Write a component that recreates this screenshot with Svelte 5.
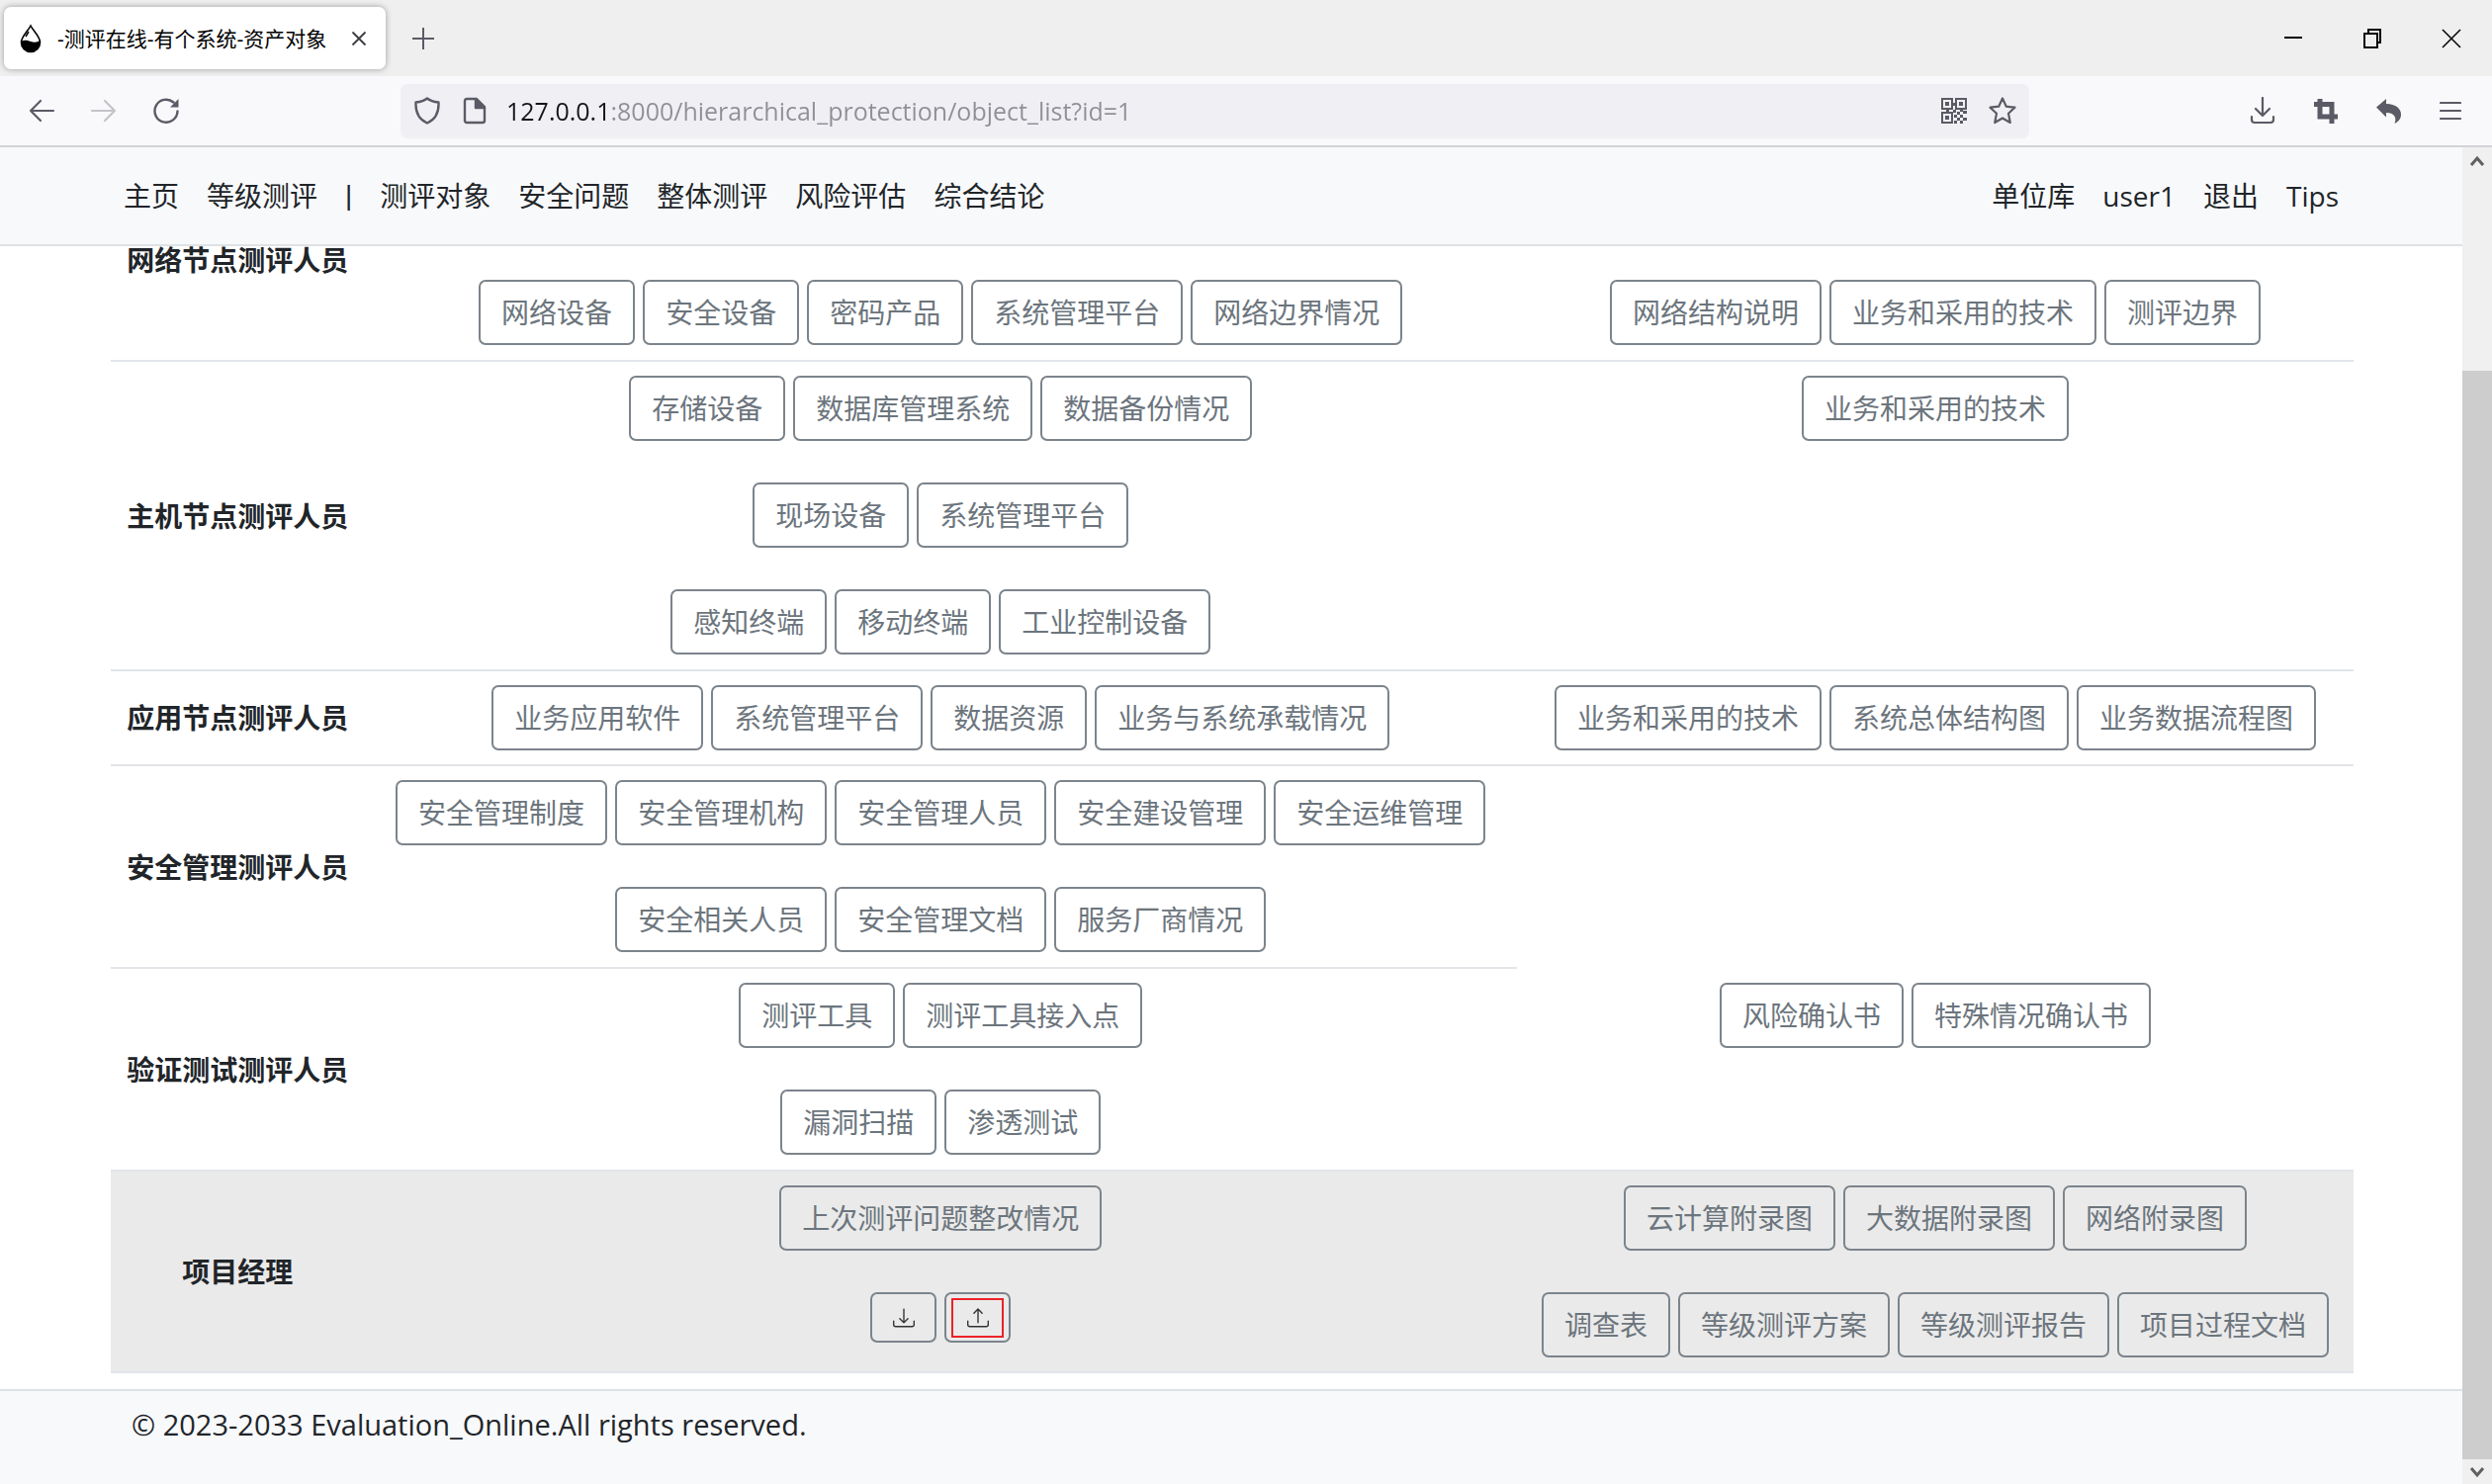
<script>
  const mainLinks = ['主页', '等级测评'];
  const sectionLinks = ['测评对象', '安全问题', '整体测评', '风险评估', '综合结论'];
  const accountLinks = ['单位库', 'user1', '退出', 'Tips'];

  // Each row holds its role and, per cell, the lines of buttons in it.
  const rows = [
    {
      role: '网络节点测评人员',
      tall: true,
      objects: [[], ['网络设备', '安全设备', '密码产品', '系统管理平台', '网络边界情况']],
      documents: [[], ['网络结构说明', '业务和采用的技术', '测评边界']]
    },
    {
      role: '主机节点测评人员',
      tall: true,
      objects: [
        ['存储设备', '数据库管理系统', '数据备份情况'],
        ['现场设备', '系统管理平台'],
        ['感知终端', '移动终端', '工业控制设备']
      ],
      documents: [['业务和采用的技术']]
    },
    {
      role: '应用节点测评人员',
      objects: [['业务应用软件', '系统管理平台', '数据资源', '业务与系统承载情况']],
      documents: [['业务和采用的技术', '系统总体结构图', '业务数据流程图']]
    },
    {
      role: '安全管理测评人员',
      tall: true,
      objects: [
        ['安全管理制度', '安全管理机构', '安全管理人员', '安全建设管理', '安全运维管理'],
        ['安全相关人员', '安全管理文档', '服务厂商情况']
      ]
    },
    {
      role: '验证测试测评人员',
      tall: true,
      objects: [
        ['测评工具', '测评工具接入点'],
        ['漏洞扫描', '渗透测试']
      ],
      documents: [['风险确认书', '特殊情况确认书']]
    },
    {
      role: '项目经理',
      active: true,
      transfer: true,
      objects: [['上次测评问题整改情况']],
      documents: [
        ['云计算附录图', '大数据附录图', '网络附录图'],
        ['调查表', '等级测评方案', '等级测评报告', '项目过程文档']
      ]
    }
  ];
</script>

{#snippet buttonLines(lines)}
  {#each lines as line}
    <div class="line">
      {#each line as label}
        <button class="btn">{label}</button>
      {/each}
    </div>
  {/each}
{/snippet}

<div class="window">
  <div class="tabs">
    <div class="tab">
      <svg width="24" height="30" viewBox="0 0 24 30">
        <path d="M12 2C9 8 2.500 13 2.500 19a9.500 9.500 0 0 0 19 0C21.500 13 15 8 12 2z" fill="#fff" stroke="#000" stroke-width="1.600" />
        <path d="M2.500 18c3-2 6-1 9.500 0s6.500 1 9.500-1v2a9.500 9.500 0 0 1-19 0z" fill="#000" />
        <path d="M10 8l-3 5" stroke="#000" stroke-width="1.500" />
      </svg>
      <span class="title">-测评在线-有个系统-资产对象</span>
      <button class="icon close" aria-label="关闭标签页">
        <svg width="16" height="16" viewBox="0 0 16 16"><path d="M1.500 1.500l13 13M14.500 1.500l-13 13" stroke="#3b3b42" stroke-width="1.800" /></svg>
      </button>
    </div>
    <button class="icon add" aria-label="新建标签页">
      <svg width="22" height="22" viewBox="0 0 22 22"><path d="M11 0v22M0 11h22" stroke="#5b5b66" stroke-width="2" /></svg>
    </button>
    <div class="controls">
      <button class="icon" aria-label="最小化">
        <svg width="20" height="20" viewBox="0 0 20 20"><path d="M1 9h18" stroke="#000" stroke-width="2" /></svg>
      </button>
      <button class="icon" aria-label="还原">
        <svg width="20" height="20" viewBox="0 0 20 20" fill="none" stroke="#000" stroke-width="2"><path d="M2 5h13v14H2zM6 5V1h12v13h-3" /></svg>
      </button>
      <button class="icon" aria-label="关闭">
        <svg width="20" height="20" viewBox="0 0 20 20"><path d="M1 1l18 18M19 1L1 19" stroke="#000" stroke-width="1.500" /></svg>
      </button>
    </div>
  </div>

  <div class="toolbar">
    <div class="history">
      <button class="icon" aria-label="后退">
        <svg width="28" height="28" viewBox="0 0 28 28" fill="none" stroke="#5b5b66" stroke-width="2.200" stroke-linecap="round" stroke-linejoin="round"><path d="M26 14H3M13 4L3 14l10 10" /></svg>
      </button>
      <button class="icon" aria-label="前进" disabled>
        <svg width="28" height="28" viewBox="0 0 28 28" fill="none" stroke="#c3c3c9" stroke-width="2.200" stroke-linecap="round" stroke-linejoin="round"><path d="M2 14h23M15 4l10 10-10 10" /></svg>
      </button>
      <button class="icon" aria-label="重新加载">
        <svg width="28" height="28" viewBox="0 0 28 28" fill="none" stroke="#5b5b66" stroke-width="2.400" stroke-linecap="round"><path d="M25.500 14.500A11.500 11.500 0 1 1 21.500 5.500" /><path d="M26.500 2v8.500h-8.500z" fill="#5b5b66" stroke="none" /></svg>
      </button>
    </div>
    <div class="address">
      <svg width="28" height="28" viewBox="0 0 28 28" fill="none" stroke="#5b5b66" stroke-width="2.400" stroke-linejoin="round"><path d="M14 1.500c3 2.500 7 3.500 11.500 4C26 16 22 23 14 26.500 6 23 2 16 2.500 5.500 7 5 11 4 14 1.500z" /></svg>
      <svg width="24" height="28" viewBox="0 0 24 28" fill="none" stroke="#5b5b66" stroke-width="2.400" stroke-linejoin="round"><path d="M4 2h10l8 8v14a2 2 0 0 1-2 2H4a2 2 0 0 1-2-2V4a2 2 0 0 1 2-2z" /><path d="M13 2v9h9z" fill="#5b5b66" /></svg>
      <input class="url" aria-label="地址" value="127.0.0.1:8000/hierarchical_protection/object_list?id=1" />
      <button class="icon" aria-label="二维码">
        <svg width="26" height="26" viewBox="0 0 26 26" fill="#5b5b66">
          <path d="M1 1h10v10H1zM15 1h10v10H15zM1 15h10v10H1z" fill="none" stroke="#5b5b66" stroke-width="2" />
          <path d="M4 4h4v4H4zM18 4h4v4h-4zM4 18h4v4H4zM12 5h2v3h-2zM12 12h3v3h-3zM5 12h3v2H5zM16 14h3v3h-3zM22 13h4v3h-4zM19 17h3v3h-3zM13 17h3v3h-3zM16 20h3v3h-3zM22 20h4v3h-4zM13 23h3v3h-3zM19 23h3v3h-3zM19 11h3v3h-3z" />
        </svg>
      </button>
      <button class="icon" aria-label="收藏">
        <svg width="28" height="28" viewBox="0 0 28 28" fill="none" stroke="#5b5b66" stroke-width="2.200" stroke-linejoin="round"><path d="M14 1.500l3.800 8.200 8.700 1-6.500 6 1.800 9.300L14 21.500 6.200 26 8 16.700l-6.500-6 8.700-1z" /></svg>
      </button>
    </div>
    <div class="actions">
      <button class="icon" aria-label="下载">
        <svg width="26" height="28" viewBox="0 0 26 28" fill="none" stroke="#5b5b66" stroke-width="2.200" stroke-linecap="round" stroke-linejoin="round"><path d="M13 1v18M6 12l7 7 7-7M2 20v3a3 3 0 0 0 3 3h16a3 3 0 0 0 3-3v-3" /></svg>
      </button>
      <button class="icon" aria-label="截图">
        <svg width="26" height="26" viewBox="0 0 26 26" fill="none" stroke="#5b5b66" stroke-width="5"><path d="M7 1v18h18M1 6.500h18V26" /></svg>
      </button>
      <button class="icon" aria-label="撤销">
        <svg width="26" height="26" viewBox="0 0 26 26" fill="#5b5b66"><path d="M0 9.500L10 1v5c10 0 15 5 15 11 0 4-3 7.500-6.500 9 2-5 1-11-8.500-11v4.500z" /></svg>
      </button>
      <button class="icon" aria-label="菜单">
        <svg width="22" height="20" viewBox="0 0 22 20"><path d="M1 2h20M1 10h20M1 18h20" stroke="#5b5b66" stroke-width="2.200" stroke-linecap="round" /></svg>
      </button>
    </div>
  </div>

  <div class="viewport">
    <div class="page">
      <nav class="navbar">
        {#each mainLinks as link}<a href="#{link}">{link}</a>{/each}
        <span class="divider">|</span>
        {#each sectionLinks as link}<a href="#{link}">{link}</a>{/each}
        <span class="spacer"></span>
        {#each accountLinks as link}<a href="#{link}">{link}</a>{/each}
      </nav>

      <main>
        <table>
          <colgroup>
            <col class="role-col" />
            <col class="objects-col" />
            <col />
          </colgroup>
          <tbody>
            {#each rows as row}
              <tr class:tall={row.tall} class:active={row.active}>
                <th scope="row">{row.role}</th>
                <td>
                  <div class="lines">
                    {@render buttonLines(row.objects)}
                    {#if row.transfer}
                      <div class="line">
                        <button class="btn small" aria-label="导出">
                          <svg width="22" height="22" viewBox="0 0 16 16" fill="#333"><path d="M.5 9.900a.5.5 0 0 1 .5.5v2.500a1 1 0 0 0 1 1h12a1 1 0 0 0 1-1v-2.500a.5.5 0 0 1 1 0v2.500a2 2 0 0 1-2 2H2a2 2 0 0 1-2-2v-2.500a.5.5 0 0 1 .5-.5z" /><path d="M7.646 11.854a.5.5 0 0 0 .708 0l3-3a.5.5 0 0 0-.708-.708L8.500 10.293V1.500a.5.5 0 0 0-1 0v8.793L5.354 8.146a.5.5 0 1 0-.708.708l3 3z" /></svg>
                        </button>
                        <button class="btn small" aria-label="导入">
                          <span class="marked">
                            <svg width="22" height="22" viewBox="0 0 16 16" fill="#333"><path d="M.5 9.900a.5.5 0 0 1 .5.5v2.500a1 1 0 0 0 1 1h12a1 1 0 0 0 1-1v-2.500a.5.5 0 0 1 1 0v2.500a2 2 0 0 1-2 2H2a2 2 0 0 1-2-2v-2.500a.5.5 0 0 1 .5-.5z" /><path d="M7.646 1.146a.5.5 0 0 1 .708 0l3 3a.5.5 0 0 1-.708.708L8.500 2.707V11.500a.5.5 0 0 1-1 0V2.707L5.354 4.854a.5.5 0 1 1-.708-.708l3-3z" /></svg>
                          </span>
                        </button>
                      </div>
                    {/if}
                  </div>
                </td>
                {#if row.documents}
                  <td><div class="lines">{@render buttonLines(row.documents)}</div></td>
                {/if}
              </tr>
            {/each}
          </tbody>
        </table>
      </main>

      <footer>© 2023-2033 Evaluation_Online.All rights reserved.</footer>
    </div>

    <div class="scrollbar">
      <svg width="16" height="12" viewBox="0 0 16 12" fill="none" stroke="#606060" stroke-width="3"><path d="M2 10l6-7 6 7" /></svg>
      <div class="track"><div class="thumb"></div></div>
      <svg width="16" height="12" viewBox="0 0 16 12" fill="none" stroke="#606060" stroke-width="3"><path d="M2 2l6 7 6-7" /></svg>
    </div>
  </div>
</div>

<style>
  :global(body) {
    margin: 0;
  }
  .window {
    display: flex;
    flex-direction: column;
    height: 100vh;
    overflow: hidden;
    font: 28px/42px 'Open Sans', 'Noto Sans CJK SC', sans-serif;
    color: #212529;
    background: #fff;
  }
  svg {
    display: block;
    flex: none;
  }
  .icon {
    display: flex;
    padding: 0;
    border: 0;
    background: none;
  }

  .tabs {
    display: flex;
    align-items: center;
    height: 77px;
    box-sizing: border-box;
    padding: 0 31px 0 4px;
    background: #efefef;
  }
  .tab {
    display: flex;
    align-items: center;
    width: 386px;
    height: 63px;
    box-sizing: border-box;
    padding: 0 19px 0 15px;
    border-radius: 7px;
    background: #fff;
    box-shadow: 0 0 6px rgba(0, 0, 0, 0.35);
  }
  .title {
    margin-left: 15px;
    font-size: 21px;
    color: #000;
    white-space: nowrap;
  }
  .close {
    margin-left: auto;
  }
  .add {
    margin-left: 27px;
  }
  .controls {
    display: flex;
    gap: 60px;
    margin-left: auto;
  }

  .toolbar {
    display: flex;
    align-items: center;
    height: 72px;
    box-sizing: border-box;
    padding: 0 31px 0 28px;
    border-bottom: 2px solid #d3d3d8;
    background: #f9f9fb;
  }
  .history {
    display: flex;
    gap: 35px;
    flex: 0 0 377px;
  }
  .address {
    display: flex;
    align-items: center;
    flex: 0 1 1647px;
    height: 55px;
    box-sizing: border-box;
    padding: 0 13px;
    border-radius: 7px;
    background: #f0f0f4;
  }
  .url {
    flex: 1;
    margin: 0 20px;
    padding: 0;
    border: 0;
    outline: 0;
    font: 25px/40px 'Open Sans', sans-serif;
    color: transparent;
    background: linear-gradient(90deg, #15141a 103px, #8f8f96 103px);
    background-clip: text;
  }
  .address > svg + svg {
    margin-left: 22px;
  }
  .address .icon + .icon {
    margin-left: 22px;
  }
  .actions {
    display: flex;
    align-items: center;
    gap: 38px;
    margin-left: auto;
  }

  .viewport {
    display: flex;
    flex: 1;
    min-height: 0;
  }
  .page {
    position: relative;
    display: flex;
    flex-direction: column;
    flex: 1;
  }
  /* The bar stays over the scrolled page. */
  .navbar {
    position: absolute;
    inset: 0 0 auto;
    display: flex;
    align-items: center;
    gap: 28px;
    height: 100px;
    box-sizing: border-box;
    padding: 0 125px;
    border-bottom: 2px solid #dee2e6;
    background: #f8f9fb;
  }
  .navbar a {
    color: inherit;
    text-decoration: none;
    white-space: nowrap;
  }
  .divider {
    font-family: 'Liberation Sans', sans-serif;
  }
  .spacer {
    flex: 1;
  }

  main {
    padding: 12px 110px 16px 112px;
  }
  table {
    width: 100%;
    table-layout: fixed;
    border-collapse: separate;
    border-spacing: 0;
  }
  .role-col {
    width: 11.3%;
  }
  .objects-col {
    width: 51.4%;
  }
  th,
  td {
    padding: 14px 0;
    border-bottom: 2px solid #e2e5e9;
    text-align: center;
    vertical-align: top;
  }
  th {
    vertical-align: middle;
    font-weight: 700;
  }
  .tall > td {
    padding-bottom: 15px;
  }
  .active > * {
    background: #eaeaea;
  }
  .lines {
    display: flex;
    flex-direction: column;
    gap: 42px;
  }
  .line {
    display: flex;
    justify-content: center;
    align-items: flex-start;
    gap: 8px;
    min-height: 66px;
  }
  .btn {
    height: 66px;
    box-sizing: border-box;
    padding: 0 21px;
    border: 2px solid #7c848b;
    border-radius: 7px;
    font: inherit;
    color: #6c757d;
    background: transparent;
    white-space: nowrap;
  }
  .small {
    display: flex;
    align-items: center;
    justify-content: center;
    width: 67px;
    height: 51px;
    padding: 0;
  }
  .marked {
    display: flex;
    align-items: center;
    justify-content: center;
    width: 53px;
    height: 40px;
    box-sizing: border-box;
    border: 2px solid #ec2227;
  }

  footer {
    flex: 1;
    padding: 13px 133px;
    border-top: 2px solid #dee2e6;
    font-size: 29px;
    background: #f8f9fb;
  }

  .scrollbar {
    display: flex;
    flex-direction: column;
    align-items: center;
    width: 30px;
    box-sizing: border-box;
    padding: 8px 0 6px;
    gap: 7px;
    background: #f0f0f0;
  }
  .track {
    display: flex;
    flex: 1;
    width: 100%;
    align-items: flex-end;
  }
  .thumb {
    width: 100%;
    height: 84.7%;
    background: #cdcdcd;
  }
</style>
